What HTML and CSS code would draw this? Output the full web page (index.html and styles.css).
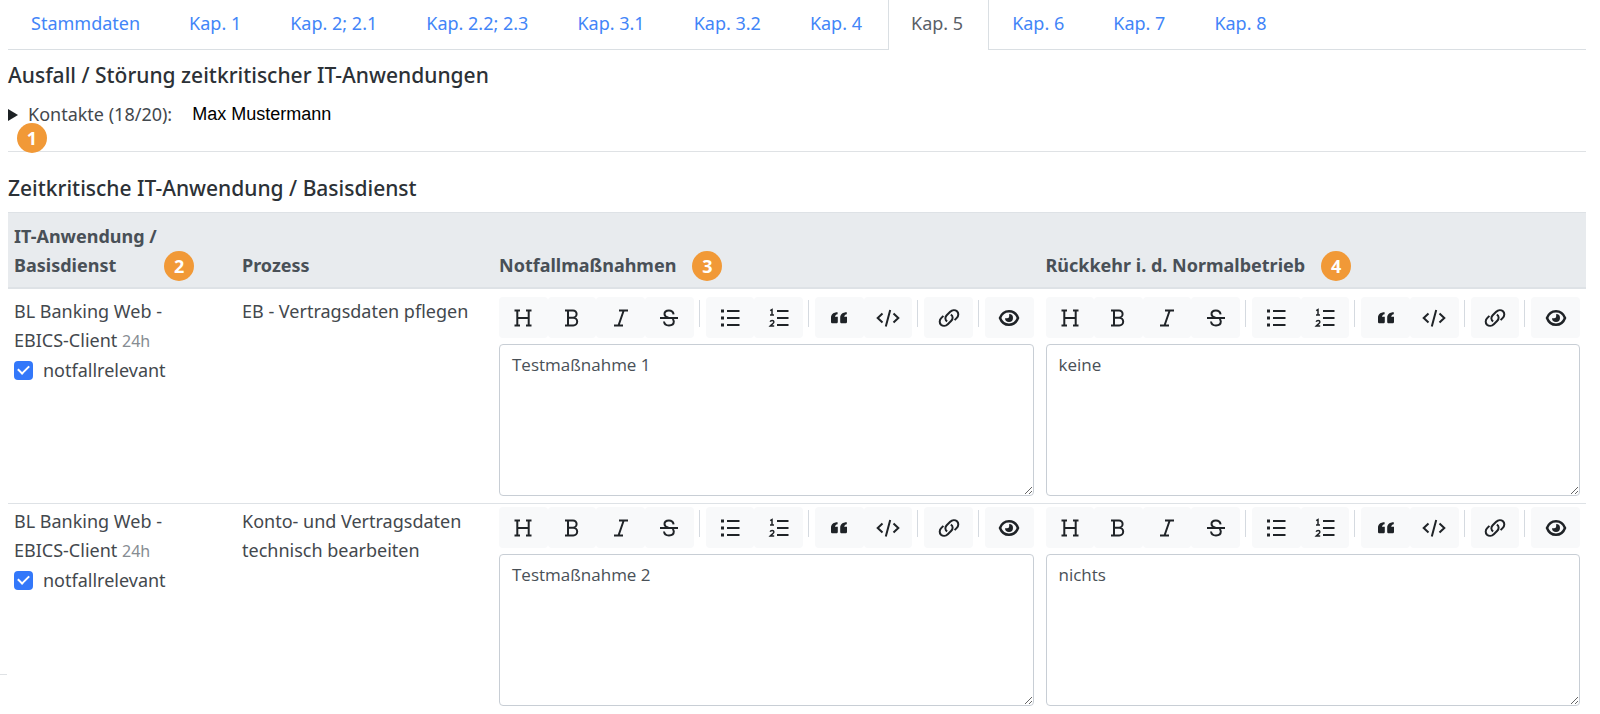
FILE: index.html
```html
<!DOCTYPE html>
<html lang="de">
<head>
<meta charset="utf-8">
<meta name="viewport" content="width=device-width, initial-scale=1">
<title>Kap. 5 – Ausfall / Störung zeitkritischer IT-Anwendungen</title>
<link rel="stylesheet" href="styles.css">
</head>
<body>
<svg class="sprite" aria-hidden="true">
  <symbol id="i-heading" viewBox="0 0 24 24"><path d="M3.500 4.500h5.500M15 4.500h5.500M3.500 19.500h5.500M15 19.500h5.500M6.300 4.500v15M17.700 4.500v15M6.300 12h11.400"/></symbol>
  <symbol id="i-bold" viewBox="0 0 24 24"><path d="M5 4.500h8a3.600 3.600 0 0 1 0 7.200H8M13.300 11.700a3.900 3.900 0 0 1 0 7.800H5M8 4.500v15"/></symbol>
  <symbol id="i-italic" viewBox="0 0 24 24"><path d="M10 4.500h9M5 19.500h9M14.700 4.500l-5.200 15"/></symbol>
  <symbol id="i-strike" viewBox="0 0 24 24"><path d="M3 12h18M16.600 8.300c-.4-2.400-2-3.800-4.700-3.800-2.700 0-4.400 1.400-4.400 3.500 0 1.900 1.300 3 4 3.800M15.500 13c.9.700 1.300 1.500 1.300 2.600 0 2.400-1.900 3.900-4.800 3.900-2.800 0-4.700-1.500-5-4"/></symbol>
  <symbol id="i-ul" viewBox="0 0 24 24"><path d="M9 5h12.500M9 12h12.500M9 19h12.500"/><path class="fill" d="M3 3.600h3v2.800H3zM3 10.600h3v2.800H3zM3 17.600h3v2.800H3z"/></symbol>
  <symbol id="i-ol" viewBox="0 0 24 24"><path d="M10 5h11.500M10 12h11.500M10 19h11.500"/><path class="thin" d="M3.200 4.600l1.800-1v5.400M3 9h4M3.200 15.800c.3-1 1-1.400 1.900-1.400 1.100 0 1.800.6 1.800 1.500 0 1.300-2 2.300-3.700 4.200h4"/></symbol>
  <symbol id="i-quote" viewBox="0 0 24 24"><path class="fill" d="M10.600 6.200v2c-1.700.3-2.500 1.200-2.600 2.600h2.800v4.900c0 1-.6 1.600-1.600 1.600H5.600c-1 0-1.600-.6-1.600-1.600v-4c0-3.300 2.400-5.500 6.600-5.500zM19.800 6.200v2c-1.700.3-2.500 1.200-2.600 2.600H20v4.900c0 1-.6 1.600-1.600 1.600h-3.600c-1 0-1.600-.6-1.600-1.600v-4c0-3.300 2.400-5.500 6.600-5.500z"/></symbol>
  <symbol id="i-code" viewBox="0 0 24 24"><path d="M6.500 7.500L1.700 12l4.800 4.500M17.500 7.500l4.800 4.500-4.800 4.500M14.200 4l-4.400 16.500"/></symbol>
  <symbol id="i-link" viewBox="0 0 24 24"><path d="M10.200 15.300c-2.400-1.300-2.300-4.300-.5-6.100l3.500-3.400c2-2 5-2.100 6.800-.5 1.800 1.800 1.700 4.700-.2 6.600l-2.200 2.200"/><path d="M13.800 8.700c2.400 1.300 2.300 4.300.5 6.100l-3.500 3.400c-2 2-5 2.100-6.800.5-1.800-1.800-1.700-4.700.2-6.600l2.200-2.200"/></symbol>
  <symbol id="i-eye" viewBox="0 0 24 24"><path class="thick" d="M3 12c1.600-4.300 5-6.800 9-6.800s7.400 2.500 9 6.800c-1.600 4.300-5 6.800-9 6.800S4.600 16.300 3 12z"/><path class="fill" d="M12.200 8a4 4 0 1 1-4.200 4.200h2.200a2 2 0 0 0 2-2z"/></symbol>
</svg>

<nav class="tabs" aria-label="Kapitel">
  <a class="tab" href="#stammdaten">Stammdaten</a>
  <a class="tab" href="#kap1">Kap. 1</a>
  <a class="tab" href="#kap2">Kap. 2; 2.1</a>
  <a class="tab" href="#kap22">Kap. 2.2; 2.3</a>
  <a class="tab" href="#kap31">Kap. 3.1</a>
  <a class="tab" href="#kap32">Kap. 3.2</a>
  <a class="tab" href="#kap4">Kap. 4</a>
  <a class="tab tab-active" href="#kap5" aria-current="page">Kap. 5</a>
  <a class="tab" href="#kap6">Kap. 6</a>
  <a class="tab" href="#kap7">Kap. 7</a>
  <a class="tab" href="#kap8">Kap. 8</a>
</nav>

<main>
  <section class="contacts">
    <h2 class="title">Ausfall / Störung zeitkritischer IT-Anwendungen</h2>
    <details>
      <summary class="summary">
        <svg class="marker" viewBox="0 0 10 12" aria-hidden="true"><path d="M0 0l10 6-10 6z"/></svg>
        <span>Kontakte (18/20):</span>
        <span class="person">Max Mustermann</span>
      </summary>
    </details>
    <span class="badge badge-contacts">1</span>
  </section>

  <section>
    <h2 class="title">Zeitkritische IT-Anwendung / Basisdienst</h2>
    <table class="grid">
      <colgroup><col class="col-app"><col class="col-process"><col><col></colgroup>
      <thead>
        <tr>
          <th scope="col">IT-Anwendung /<div class="head head-wide">Basisdienst <span class="badge">2</span></div></th>
          <th scope="col">Prozess</th>
          <th scope="col"><div class="head">Notfallmaßnahmen <span class="badge">3</span></div></th>
          <th scope="col"><div class="head">Rückkehr i. d. Normalbetrieb <span class="badge">4</span></div></th>
        </tr>
      </thead>
      <tbody>
        <tr>
          <td>BL Banking Web -<br>EBICS-Client <small class="hours">24h</small>
            <label class="check"><input type="checkbox" checked> notfallrelevant</label></td>
          <td>EB - Vertragsdaten pflegen</td>
          <td>
            <div class="toolbar" role="toolbar" aria-label="Formatierung">
              <button type="button" aria-label="Überschrift"><svg><use href="#i-heading"/></svg></button><button type="button" aria-label="Fett"><svg><use href="#i-bold"/></svg></button><button type="button" aria-label="Kursiv"><svg><use href="#i-italic"/></svg></button><button type="button" aria-label="Durchgestrichen"><svg><use href="#i-strike"/></svg></button>
              <i class="sep"></i>
              <button type="button" aria-label="Liste"><svg><use href="#i-ul"/></svg></button><button type="button" aria-label="Nummerierte Liste"><svg><use href="#i-ol"/></svg></button>
              <i class="sep"></i>
              <button type="button" aria-label="Zitat"><svg><use href="#i-quote"/></svg></button><button type="button" aria-label="Code"><svg><use href="#i-code"/></svg></button>
              <i class="sep"></i>
              <button type="button" aria-label="Link"><svg><use href="#i-link"/></svg></button>
              <i class="sep"></i>
              <button type="button" aria-label="Vorschau"><svg><use href="#i-eye"/></svg></button>
            </div>
            <textarea class="text" aria-label="Notfallmaßnahmen">Testmaßnahme 1</textarea>
          </td>
          <td>
            <div class="toolbar" role="toolbar" aria-label="Formatierung">
              <button type="button" aria-label="Überschrift"><svg><use href="#i-heading"/></svg></button><button type="button" aria-label="Fett"><svg><use href="#i-bold"/></svg></button><button type="button" aria-label="Kursiv"><svg><use href="#i-italic"/></svg></button><button type="button" aria-label="Durchgestrichen"><svg><use href="#i-strike"/></svg></button>
              <i class="sep"></i>
              <button type="button" aria-label="Liste"><svg><use href="#i-ul"/></svg></button><button type="button" aria-label="Nummerierte Liste"><svg><use href="#i-ol"/></svg></button>
              <i class="sep"></i>
              <button type="button" aria-label="Zitat"><svg><use href="#i-quote"/></svg></button><button type="button" aria-label="Code"><svg><use href="#i-code"/></svg></button>
              <i class="sep"></i>
              <button type="button" aria-label="Link"><svg><use href="#i-link"/></svg></button>
              <i class="sep"></i>
              <button type="button" aria-label="Vorschau"><svg><use href="#i-eye"/></svg></button>
            </div>
            <textarea class="text" aria-label="Rückkehr in den Normalbetrieb">keine</textarea>
          </td>
        </tr>
        <tr>
          <td>BL Banking Web -<br>EBICS-Client <small class="hours">24h</small>
            <label class="check"><input type="checkbox" checked> notfallrelevant</label></td>
          <td>Konto- und Vertragsdaten technisch bearbeiten</td>
          <td>
            <div class="toolbar" role="toolbar" aria-label="Formatierung">
              <button type="button" aria-label="Überschrift"><svg><use href="#i-heading"/></svg></button><button type="button" aria-label="Fett"><svg><use href="#i-bold"/></svg></button><button type="button" aria-label="Kursiv"><svg><use href="#i-italic"/></svg></button><button type="button" aria-label="Durchgestrichen"><svg><use href="#i-strike"/></svg></button>
              <i class="sep"></i>
              <button type="button" aria-label="Liste"><svg><use href="#i-ul"/></svg></button><button type="button" aria-label="Nummerierte Liste"><svg><use href="#i-ol"/></svg></button>
              <i class="sep"></i>
              <button type="button" aria-label="Zitat"><svg><use href="#i-quote"/></svg></button><button type="button" aria-label="Code"><svg><use href="#i-code"/></svg></button>
              <i class="sep"></i>
              <button type="button" aria-label="Link"><svg><use href="#i-link"/></svg></button>
              <i class="sep"></i>
              <button type="button" aria-label="Vorschau"><svg><use href="#i-eye"/></svg></button>
            </div>
            <textarea class="text" aria-label="Notfallmaßnahmen">Testmaßnahme 2</textarea>
          </td>
          <td>
            <div class="toolbar" role="toolbar" aria-label="Formatierung">
              <button type="button" aria-label="Überschrift"><svg><use href="#i-heading"/></svg></button><button type="button" aria-label="Fett"><svg><use href="#i-bold"/></svg></button><button type="button" aria-label="Kursiv"><svg><use href="#i-italic"/></svg></button><button type="button" aria-label="Durchgestrichen"><svg><use href="#i-strike"/></svg></button>
              <i class="sep"></i>
              <button type="button" aria-label="Liste"><svg><use href="#i-ul"/></svg></button><button type="button" aria-label="Nummerierte Liste"><svg><use href="#i-ol"/></svg></button>
              <i class="sep"></i>
              <button type="button" aria-label="Zitat"><svg><use href="#i-quote"/></svg></button><button type="button" aria-label="Code"><svg><use href="#i-code"/></svg></button>
              <i class="sep"></i>
              <button type="button" aria-label="Link"><svg><use href="#i-link"/></svg></button>
              <i class="sep"></i>
              <button type="button" aria-label="Vorschau"><svg><use href="#i-eye"/></svg></button>
            </div>
            <textarea class="text" aria-label="Rückkehr in den Normalbetrieb">nichts</textarea>
          </td>
        </tr>
      </tbody>
    </table>
  </section>
</main>
<span class="edge-line"></span>
</body>
</html>
```
FILE: styles.css
```css
* { box-sizing: border-box; }

body {
  position: relative;
  margin: 0;
  padding: 0 14px 0 8px;
  background: #fff;
  color: #43484d;
  font: 18px/29px "Noto Sans", "Open Sans", sans-serif;
}

.sprite { display: none; }

/* Tabs */
.tabs {
  display: flex;
  height: 50px;
  border-bottom: 1px solid #dadfe3;
}
.tab {
  margin-bottom: -1px;
  padding: 9px 25px 0 22px;
  border: 1px solid transparent;
  border-width: 0 1px;
  color: #4285f8;
  text-decoration: none;
  white-space: nowrap;
}
.tab-active {
  border-color: #dadfe3;
  background: #fff;
  color: #5a6067;
}

/* Headings and contacts */
.title {
  margin: 0;
  color: #2c3136;
  font-size: 21px;
  font-weight: 500;
  line-height: 26px;
}
.contacts {
  position: relative;
  height: 102px;
  margin-bottom: 23px;
  padding-top: 12px;
  border-bottom: 1px solid #dfe2e5;
}
.summary {
  display: flex;
  align-items: center;
  margin-top: 12px;
  list-style: none;
  cursor: pointer;
}
.summary::-webkit-details-marker { display: none; }
.marker {
  width: 10px;
  height: 12px;
  margin-right: 10px;
  fill: #1d2124;
}
.person {
  margin-left: 20px;
  color: #000;
  font-family: "Liberation Sans", Arial, sans-serif;
}

.badge {
  display: inline-flex;
  align-items: center;
  justify-content: center;
  width: 30px;
  height: 30px;
  border-radius: 50%;
  background: #f19937;
  color: #fff;
  font-size: 18px;
  font-weight: 700;
  line-height: 30px;
}
.badge-contacts {
  position: absolute;
  left: 9px;
  bottom: -2px;
}

/* Table */
.grid {
  width: 100%;
  margin-top: 11px;
  border-collapse: separate;
  border-spacing: 0;
  table-layout: fixed;
}
.col-app { width: 228px; }
.col-process { width: 257px; }
th {
  padding: 9px 6px 7px;
  border-top: 1px solid #dee2e6;
  border-bottom: 2px solid #dee2e6;
  background: #e8ebee;
  color: #495057;
  font-weight: 700;
  text-align: left;
  vertical-align: bottom;
}
.head {
  display: flex;
  align-items: center;
  gap: 16px;
  height: 29px;
}
.head-wide { gap: 48px; }
td {
  padding: 8px 6px 7px;
  vertical-align: top;
}
tr + tr td {
  padding-top: 3px;
  border-top: 1px solid #dee2e6;
}
.hours {
  color: #868c92;
  font-size: 16px;
}
.check {
  display: flex;
  align-items: center;
  gap: 10px;
}
.check input {
  display: grid;
  place-items: center;
  width: 19px;
  height: 19px;
  margin: 0;
  border-radius: 4px;
  background: #3378fa;
  appearance: none;
}
.check input:checked::after {
  content: "";
  width: 9px;
  height: 5px;
  margin-bottom: 4px;
  border: solid #fff;
  border-width: 0 0 2px 2px;
  transform: rotate(-45deg);
}

/* Editor */
.toolbar {
  display: flex;
  height: 41px;
  margin-bottom: 6px;
}
.toolbar button {
  display: flex;
  flex: 1;
  align-items: center;
  justify-content: center;
  padding: 0;
  border: 0;
  border-radius: 4px;
  background: #f8f9fa;
}
.toolbar svg {
  width: 24px;
  height: 24px;
}
symbol path {
  fill: none;
  stroke: #1f2327;
  stroke-width: 2;
}
symbol .thin { stroke-width: 1.500; }
symbol .thick { stroke-width: 2.500; }
symbol .fill { fill: #1f2327; stroke: none; }
.sep {
  width: 1px;
  height: 27px;
  margin: 3px 6px 0 5px;
  background: #d5dae0;
}
.text {
  display: block;
  width: 100%;
  height: 152px;
  padding: 5px 12px;
  border: 1px solid #c8ced5;
  border-radius: 4px;
  background: #fff;
  color: #495057;
  font: 17px/29px "Open Sans", "Noto Sans", sans-serif;
  resize: vertical;
}

/* Rule that runs in from the left page edge */
.edge-line {
  position: absolute;
  left: 0;
  top: 674px;
  width: 7px;
  height: 1px;
  background: #dfe2e5;
}
```
